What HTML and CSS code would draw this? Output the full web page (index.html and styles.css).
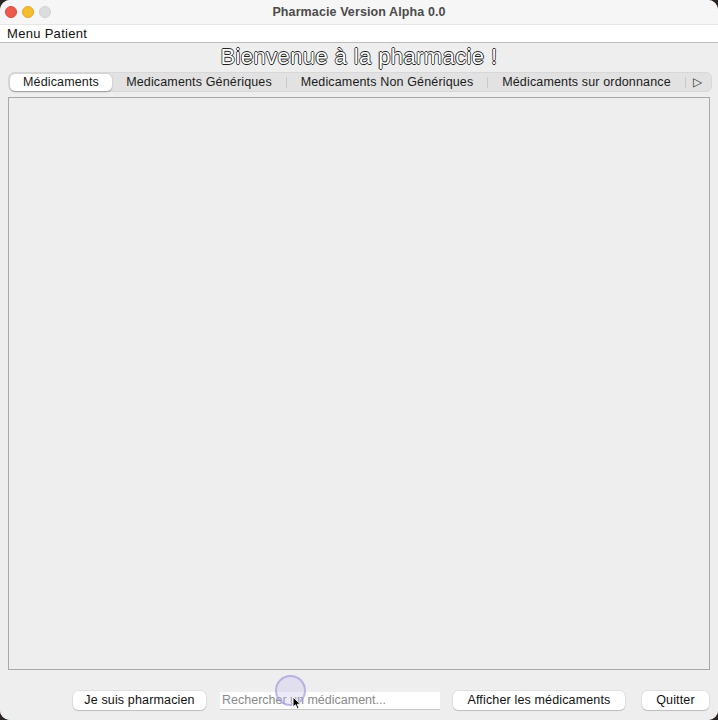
FILE: index.html
```html
<!DOCTYPE html>
<html lang="fr">
<head>
<meta charset="utf-8">
<title>Pharmacie Version Alpha 0.0</title>
<link rel="stylesheet" href="styles.css">
</head>
<body>
<div class="window">
  <div class="titlebar">
    <div class="lights">
      <span class="light red"></span>
      <span class="light yellow"></span>
      <span class="light gray"></span>
    </div>
    <div class="title">Pharmacie Version Alpha 0.0</div>
  </div>
  <div class="menubar"><span class="menu">Menu Patient</span></div>
  <div class="content">
    <h1 class="heading">Bienvenue à la pharmacie !</h1>
    <div class="tabbar">
      <div class="tab selected t1">Médicaments</div>
      <div class="tab t2">Medicaments Génériques</div>
      <span class="sep"></span>
      <div class="tab t3">Medicaments Non Génériques</div>
      <span class="sep"></span>
      <div class="tab t4">Médicaments sur ordonnance</div>
      <span class="sep"></span>
      <div class="tab more">&#9655;</div>
    </div>
    <div class="panel"></div>
    <div class="actions">
      <button class="btn b1">Je suis pharmacien</button>
      <input class="search" type="text" placeholder="Rechercher un médicament...">
      <button class="btn b3">Afficher les médicaments</button>
      <button class="btn b4">Quitter</button>
    </div>
  </div>
  <div class="cursor">
    <span class="ring"></span>
    <svg class="pointer" width="10" height="14" viewBox="0 0 10 14">
      <path d="M1 1 L1 11 L3.5 8.8 L5.3 12.8 L7 12 L5.3 8.2 L8.6 8.2 Z" fill="#000" stroke="#fff" stroke-width="1"/>
    </svg>
  </div>
</div>
</body>
</html>
```

FILE: styles.css
```css
* { box-sizing: border-box; }
html, body { margin: 0; padding: 0; }
body {
  background: #2b2523;
  width: 718px;
  height: 720px;
  overflow: hidden;
  font-family: "Liberation Sans", Arial, sans-serif;
}
.window {
  position: relative;
  width: 718px;
  height: 720px;
  background: #eeeeee;
  border-radius: 10px;
  overflow: hidden;
  display: flex;
  flex-direction: column;
}
.titlebar {
  height: 25px;
  flex: none;
  background: #f6f6f6;
  display: flex;
  align-items: center;
  position: relative;
  border-bottom: 1px solid #e6e6e6;
}
.lights {
  display: flex;
  gap: 5px;
  padding-left: 5px;
  align-items: center;
}
.light {
  width: 12px;
  height: 12px;
  border-radius: 50%;
  display: block;
}
.light.red { background: #ee5a52; border: 0.5px solid #d9483f; }
.light.yellow { background: #f6bd30; border: 0.5px solid #dea524; }
.light.gray { background: #dddddd; border: 0.5px solid #d0d0d0; }
.title {
  flex: 1;
  text-align: center;
  font-weight: bold;
  font-size: 12.5px;
  color: #4b4b4b;
  margin-right: 51px;
  letter-spacing: 0.1px;
}
.menubar {
  height: 18px;
  flex: none;
  background: #ffffff;
  border-bottom: 1px solid #bdbdbd;
  display: flex;
  align-items: center;
  padding-left: 7px;
}
.menu {
  font-size: 13px;
  color: #111;
  letter-spacing: 0.3px;
}
.content {
  flex: 1;
  display: flex;
  flex-direction: column;
  padding: 0 8px;
  background: #eeeeee;
}
.heading {
  margin: 0;
  height: 29px;
  padding-top: 1px;
  text-align: center;
  font-size: 22px;
  font-weight: normal;
  line-height: 26px;
  color: #ffffff;
  letter-spacing: 0.4px;
  text-shadow: 0.8px 0 0 #222, -0.8px 0 0 #222, 0 0.8px 0 #222, 0 -0.8px 0 #222;
  font-family: "Liberation Sans", Arial, sans-serif;
}
.tabbar {
  height: 20px;
  flex: none;
  display: flex;
  align-items: center;
  background: #e2e2e2;
  border: 1px solid #d8d8d8;
  border-radius: 6px;
  padding: 0 1px;
  width: 704px;
}
.tab {
  height: 18px;
  display: flex;
  align-items: center;
  justify-content: center;
  font-size: 12.5px;
  color: #1a1a1a;
  flex: none;
  white-space: nowrap;
  letter-spacing: 0.15px;
}
.tab.selected {
  background: #ffffff;
  border-radius: 5px;
  box-shadow: 0 0.5px 1.5px rgba(0,0,0,0.3);
  height: 17px;
}
.t1 { width: 102px; }
.t2 { width: 174px; }
.t3 { width: 200px; }
.t4 { width: 197px; }
.more { width: 24px; font-size: 12px; color: #333; }
.sep {
  width: 1px;
  height: 11px;
  background: #c9c9c9;
  flex: none;
}
.panel {
  margin-top: 5px;
  height: 573px;
  flex: none;
  width: 702px;
  border: 1px solid #a9a9a9;
  background: #eeeeee;
}
.actions {
  display: flex;
  justify-content: flex-end;
  align-items: center;
  padding-top: 21px;
  padding-right: 1px;
}
.btn {
  height: 19px;
  padding: 0;
  background: #ffffff;
  border: none;
  border-radius: 5px;
  box-shadow: 0 0 0 0.5px rgba(0,0,0,0.12), 0 1px 1px rgba(0,0,0,0.15);
  font-family: "Liberation Sans", Arial, sans-serif;
  font-size: 12.5px;
  color: #111;
  line-height: 19px;
  white-space: nowrap;
  letter-spacing: 0.15px;
  flex: none;
}
.b1 { width: 133px; }
.b3 { width: 172px; margin-left: 13px; }
.b4 { width: 67px; margin-left: 17px; }
.search {
  width: 220px;
  height: 18px;
  margin-left: 14px;
  border: none;
  border-bottom: 1px solid #c8c8c8;
  background: #ffffff;
  font-family: "Liberation Sans", Arial, sans-serif;
  font-size: 12.5px;
  padding: 0 2px;
  outline: none;
  flex: none;
}
.search::placeholder { color: #8a8a8a; }
.cursor {
  position: absolute;
  left: 275px;
  top: 675px;
  width: 32px;
  height: 32px;
}
.ring {
  position: absolute;
  left: 0;
  top: 0;
  width: 31px;
  height: 31px;
  border-radius: 50%;
  border: 2px solid rgba(150, 140, 215, 0.55);
  background: rgba(200, 195, 235, 0.35);
}
.pointer {
  position: absolute;
  left: 17px;
  top: 21px;
}
```
